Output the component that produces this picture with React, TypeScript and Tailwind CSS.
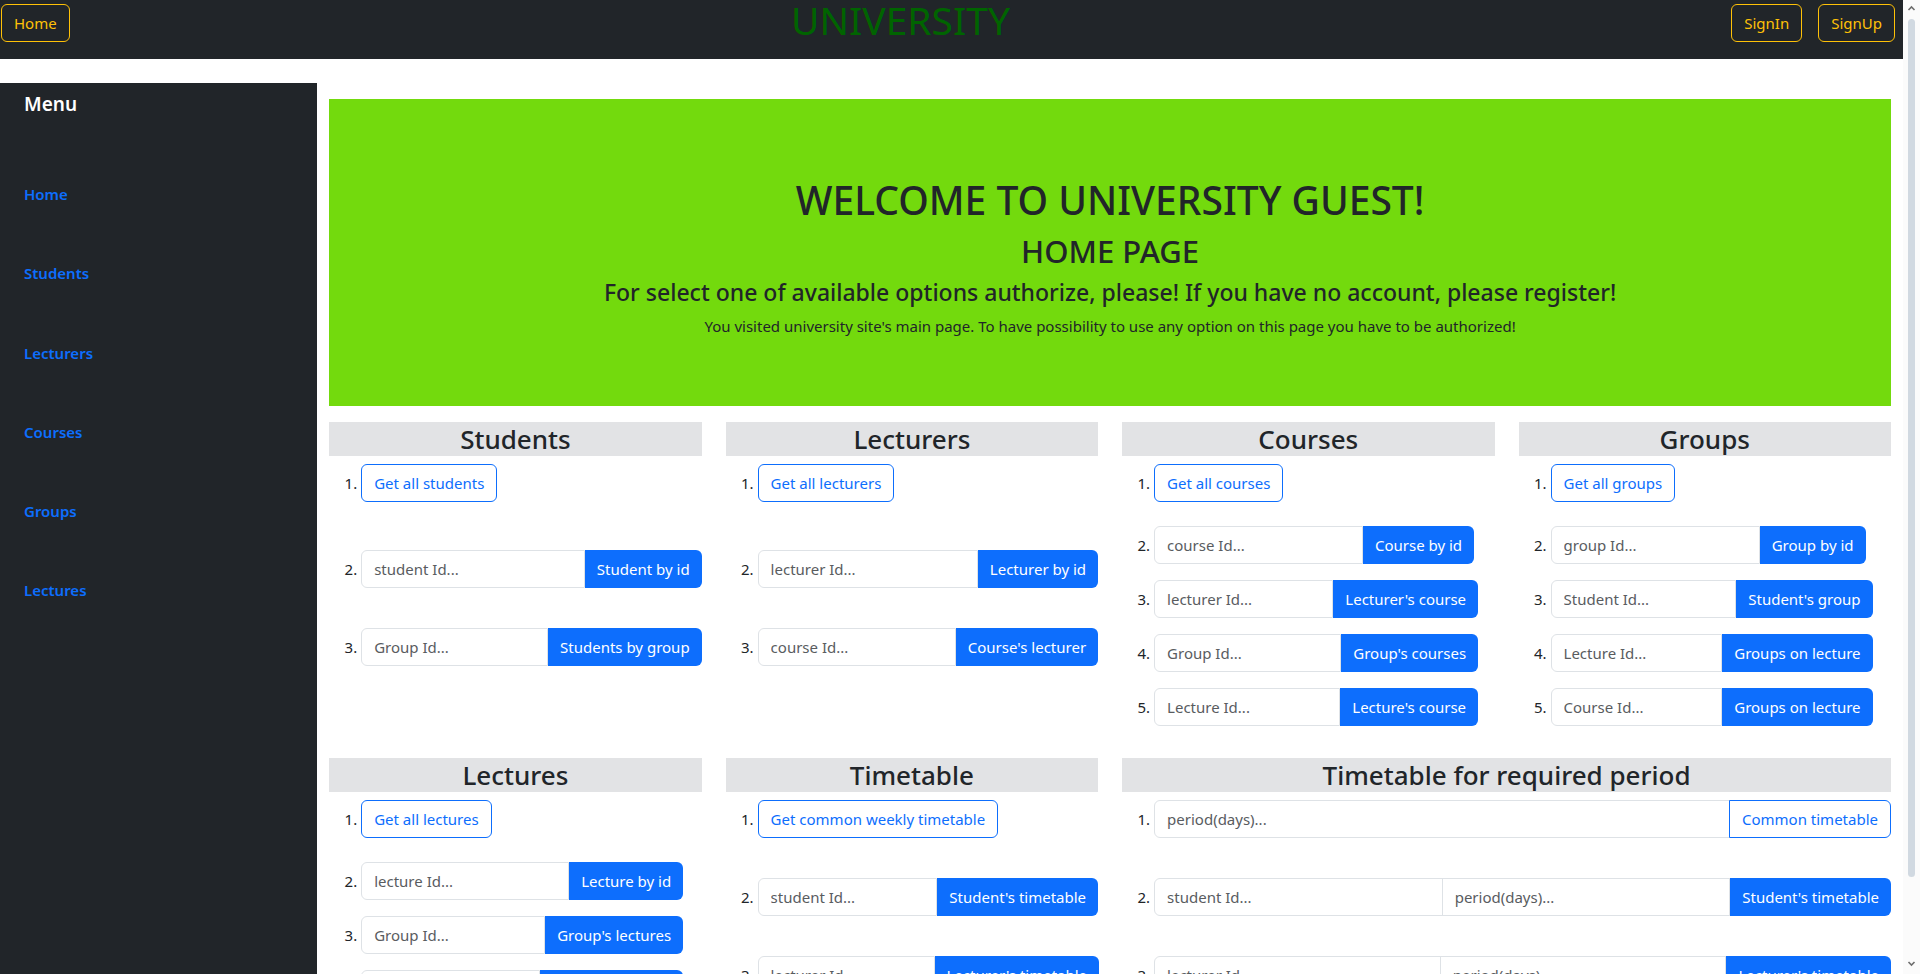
import React from "react";

type Row =
  | { kind: "all"; label: string; mt: string }
  | { kind: "group"; inputs: string[]; button: string; mt: string; width?: string; outline?: boolean };

type Section = {
  title: string;
  span?: boolean;
  rows: Row[];
};

const sections: Section[] = [
  {
    title: "Students",
    rows: [
      { kind: "all", label: "Get all students", mt: "mt-2" },
      { kind: "group", inputs: ["student Id..."], button: "Student by id", mt: "mt-12" },
      { kind: "group", inputs: ["Group Id..."], button: "Students by group", mt: "mt-10" },
    ],
  },
  {
    title: "Lecturers",
    rows: [
      { kind: "all", label: "Get all lecturers", mt: "mt-2" },
      { kind: "group", inputs: ["lecturer Id..."], button: "Lecturer by id", mt: "mt-12" },
      { kind: "group", inputs: ["course Id..."], button: "Course's lecturer", mt: "mt-10" },
    ],
  },
  {
    title: "Courses",
    rows: [
      { kind: "all", label: "Get all courses", mt: "mt-2" },
      { kind: "group", inputs: ["course Id..."], button: "Course by id", mt: "mt-6", width: "w-[320px]" },
      { kind: "group", inputs: ["lecturer Id..."], button: "Lecturer's course", mt: "mt-4", width: "w-[324px]" },
      { kind: "group", inputs: ["Group Id..."], button: "Group's courses", mt: "mt-4", width: "w-[324px]" },
      { kind: "group", inputs: ["Lecture Id..."], button: "Lecture's course", mt: "mt-4", width: "w-[324px]" },
    ],
  },
  {
    title: "Groups",
    rows: [
      { kind: "all", label: "Get all groups", mt: "mt-2" },
      { kind: "group", inputs: ["group Id..."], button: "Group by id", mt: "mt-6", width: "w-[315px]" },
      { kind: "group", inputs: ["Student Id..."], button: "Student's group", mt: "mt-4", width: "w-[322px]" },
      { kind: "group", inputs: ["Lecture Id..."], button: "Groups on lecture", mt: "mt-4", width: "w-[322px]" },
      { kind: "group", inputs: ["Course Id..."], button: "Groups on lecture", mt: "mt-4", width: "w-[322px]" },
    ],
  },
  {
    title: "Lectures",
    rows: [
      { kind: "all", label: "Get all lectures", mt: "mt-2" },
      { kind: "group", inputs: ["lecture Id..."], button: "Lecture by id", mt: "mt-6", width: "w-[322px]" },
      { kind: "group", inputs: ["Group Id..."], button: "Group's lectures", mt: "mt-4", width: "w-[322px]" },
      { kind: "group", inputs: ["Course Id..."], button: "Course's lectures", mt: "mt-4", width: "w-[322px]" },
    ],
  },
  {
    title: "Timetable",
    rows: [
      { kind: "all", label: "Get common weekly timetable", mt: "mt-2" },
      { kind: "group", inputs: ["student Id..."], button: "Student's timetable", mt: "mt-10" },
      { kind: "group", inputs: ["lecturer Id..."], button: "Lecturer's timetable", mt: "mt-10" },
    ],
  },
  {
    title: "Timetable for required period",
    span: true,
    rows: [
      { kind: "group", inputs: ["period(days)..."], button: "Common timetable", mt: "mt-2", outline: true },
      { kind: "group", inputs: ["student Id...", "period(days)..."], button: "Student's timetable", mt: "mt-10" },
      { kind: "group", inputs: ["lecturer Id...", "period(days)..."], button: "Lecturer's timetable", mt: "mt-10" },
    ],
  },
];

const menu = ["Home", "Students", "Lecturers", "Courses", "Groups", "Lectures"];

function NavButton({ children }: { children: React.ReactNode }) {
  return (
    <button
      type="button"
      className="h-[38px] rounded-md border border-[#ffc107] px-3 text-[15px] leading-6 text-[#ffc107]"
    >
      {children}
    </button>
  );
}

function SectionBlock({ section }: { section: Section }) {
  return (
    <div className={section.span ? "col-span-2" : ""}>
      <h3 className="bg-[#e2e3e5] text-center text-[26px] leading-[34px] font-medium">
        {section.title}
      </h3>
      <ol>
        {section.rows.map((row, i) => (
          <li key={i} className={`flex items-center ${row.mt}`}>
            <span className="w-8 shrink-0 pr-1 text-right text-[15px]">{i + 1}.</span>
            {row.kind === "all" ? (
              <button
                type="button"
                className="h-[38px] rounded-md border border-[#0d6efd] bg-white px-3 text-[15px] leading-6 text-[#0d6efd]"
              >
                {row.label}
              </button>
            ) : (
              <div className={`flex h-[38px] ${row.width ?? "flex-1"}`}>
                {row.inputs.map((ph, j) => (
                  <input
                    key={j}
                    placeholder={ph}
                    className={`min-w-0 flex-1 border border-[#dee2e6] bg-white px-3 text-[15px] text-[#212529] outline-none placeholder:text-[#595c5f] ${
                      j === 0 ? "rounded-l-md" : "-ml-px"
                    }`}
                  />
                ))}
                <button
                  type="button"
                  className={`shrink-0 rounded-r-md px-3 text-[15px] leading-6 ${
                    row.outline
                      ? "-ml-px border border-[#0d6efd] bg-white text-[#0d6efd]"
                      : "bg-[#0d6efd] text-white"
                  }`}
                >
                  {row.button}
                </button>
              </div>
            )}
          </li>
        ))}
      </ol>
    </div>
  );
}

function ScrollBar() {
  return (
    <div className="flex w-[17px] shrink-0 flex-col items-center bg-[#fbfbfb] pt-[4px] pb-[6px]">
      <svg width="9" height="9" viewBox="0 0 9 9" className="text-[#6e6e6e]">
        <path d="M1.5 6 L4.5 3 L7.5 6" fill="none" stroke="currentColor" strokeWidth="1.6" />
      </svg>
      <div className="mt-[6px] h-[858px] w-[7px] rounded-full bg-[#d1d9e1]" />
      <div className="flex-1" />
      <svg width="9" height="9" viewBox="0 0 9 9" className="text-[#6e6e6e]">
        <path d="M1.5 3 L4.5 6 L7.5 3" fill="none" stroke="currentColor" strokeWidth="1.6" />
      </svg>
    </div>
  );
}

export default function App() {
  return (
    <div className="flex h-screen overflow-hidden bg-white font-['Noto_Sans',sans-serif] text-[#212529]">
      <div className="min-w-0 flex-1">
        <nav className="flex h-[59px] items-start justify-between bg-[#212529] pt-1 pr-2 pl-px">
          <NavButton>Home</NavButton>
          <div className="-mt-1 text-[39px] leading-10 text-[#006400]">UNIVERSITY</div>
          <div className="flex gap-4">
            <NavButton>SignIn</NavButton>
            <NavButton>SignUp</NavButton>
          </div>
        </nav>

        <div className="mt-6 flex">
          <aside className="w-1/6 shrink-0 bg-[#212529] pt-[6px] pl-6">
            <div className="text-[19px] leading-[30px] font-semibold text-white">Menu</div>
            <ul className="mt-[63px] flex flex-col gap-[55.3px]">
              {menu.map((m) => (
                <li key={m}>
                  <a href="#" className="text-[15px] leading-6 font-semibold text-[#0d6efd]">
                    {m}
                  </a>
                </li>
              ))}
            </ul>
          </aside>

          <main className="flex-1 px-3 pt-4 pb-10">
            <section className="flex h-[307px] flex-col items-center bg-[#73da0d] pt-[77px] text-center">
              <h1 className="mb-2 text-[39px] leading-[48px] font-medium">WELCOME TO UNIVERSITY GUEST!</h1>
              <h2 className="mb-2 text-[31px] leading-[38px] font-medium">HOME PAGE</h2>
              <h4 className="mb-[7px] text-[23px] leading-[29px] font-medium">
                For select one of available options authorize, please! If you have no account, please register!
              </h4>
              <p className="text-[15px] leading-6">
                You visited university site's main page. To have possibility to use any option on this page you
                have to be authorized!
              </p>
            </section>

            <div className="mt-4 grid grid-cols-4 gap-x-6 gap-y-8">
              {sections.map((s) => (
                <SectionBlock key={s.title} section={s} />
              ))}
            </div>
          </main>
        </div>
      </div>
      <ScrollBar />
    </div>
  );
}
